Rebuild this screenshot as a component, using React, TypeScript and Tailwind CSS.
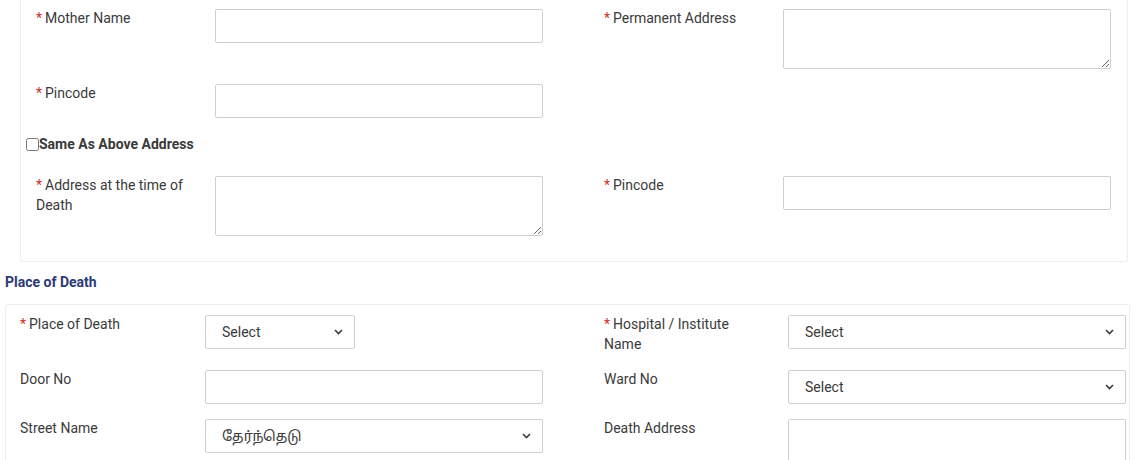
import React from 'react'

const Req = () => <span className="text-[#d0302a] mr-[3px]">*</span>

function Chevron() {
  return (
    <svg className="pointer-events-none absolute right-[12px] top-1/2 -translate-y-1/2" width="9" height="6" viewBox="0 0 9 6">
      <polyline points="1,1 4.5,4.5 8,1" fill="none" stroke="#3a3a3a" strokeWidth="1.6" />
    </svg>
  )
}

function Sel({ w, text }: { w: string; text: string }) {
  return (
    <div className={`relative ${w} h-[34px]`}>
      <select className="appearance-none w-full h-full border border-[#cfcfcf] rounded-[2px] bg-white pl-[16px] pr-8 text-[14px] text-[#3a3a3a] outline-none">
        <option>{text}</option>
      </select>
      <Chevron />
    </div>
  )
}

const input = 'h-[34px] border border-[#cfcfcf] rounded-[2px] bg-white outline-none'
const area = 'h-[60px] border border-[#cfcfcf] rounded-[2px] bg-white outline-none'
const lbl = '-translate-y-px'

export default function App() {
  return (
    <div className="min-h-screen bg-white font-['Roboto','Noto_Sans','Noto_Sans_Tamil',sans-serif] text-[14px] leading-[20px] text-[#3a3a3a]">
      <div className="ml-[20px] w-[1108px] border-x border-b border-[#eeeeee] rounded-b-[3px] pl-[15px] pt-[9px] pb-[25px]">
        <div className="flex mb-[15px]">
          <div className="flex w-[568px]">
            <label className={`${lbl} w-[179px]`}><Req />Mother Name</label>
            <input className={`${input} w-[328px]`} />
          </div>
          <div className="flex">
            <label className={`${lbl} w-[179px]`}><Req />Permanent Address</label>
            <textarea className={`${area} w-[328px]`} />
          </div>
        </div>
        <div className="flex">
          <div className="flex w-[568px]">
            <label className={`${lbl} w-[179px]`}><Req />Pincode</label>
            <input className={`${input} w-[328px]`} />
          </div>
        </div>
        <div className="flex items-center -ml-[10px] mt-[16px] h-[20px]">
          <input type="checkbox" className="w-[13px] h-[13px] m-0" />
          <span className="font-bold">Same As Above Address</span>
        </div>
        <div className="flex mt-[22px]">
          <div className="flex w-[568px]">
            <label className={`${lbl} w-[179px] pr-[20px]`}><Req />Address at the time of Death</label>
            <textarea className={`${area} w-[328px]`} />
          </div>
          <div className="flex">
            <label className={`${lbl} w-[179px]`}><Req />Pincode</label>
            <input className={`${input} w-[328px]`} />
          </div>
        </div>
      </div>

      <div className="ml-[5px] mt-[10px] font-bold text-[#2c3a78]">Place of Death</div>

      <div className="ml-[5px] mt-[12px] w-[1125px] border border-[#eeeeee] rounded-[3px] pl-[14px] pt-[10px]">
        <div className="flex mb-[15px]">
          <div className="flex w-[584px]">
            <label className={`${lbl} w-[185px]`}><Req />Place of Death</label>
            <Sel w="w-[150px]" text="Select" />
          </div>
          <div className="flex">
            <label className={`${lbl} w-[184px] pr-[40px]`}><Req />Hospital / Institute Name</label>
            <Sel w="w-[338px]" text="Select" />
          </div>
        </div>
        <div className="flex mb-[15px]">
          <div className="flex w-[584px]">
            <label className={`${lbl} w-[185px]`}>Door No</label>
            <input className={`${input} w-[338px]`} />
          </div>
          <div className="flex">
            <label className={`${lbl} w-[184px]`}>Ward No</label>
            <Sel w="w-[338px]" text="Select" />
          </div>
        </div>
        <div className="flex mb-[15px]">
          <div className="flex w-[584px]">
            <label className={`${lbl} w-[185px]`}>Street Name</label>
            <Sel w="w-[338px]" text="தேர்ந்தெடு" />
          </div>
          <div className="flex">
            <label className={`${lbl} w-[184px]`}>Death Address</label>
            <textarea className={`${area} w-[338px]`} />
          </div>
        </div>
      </div>
    </div>
  )
}
